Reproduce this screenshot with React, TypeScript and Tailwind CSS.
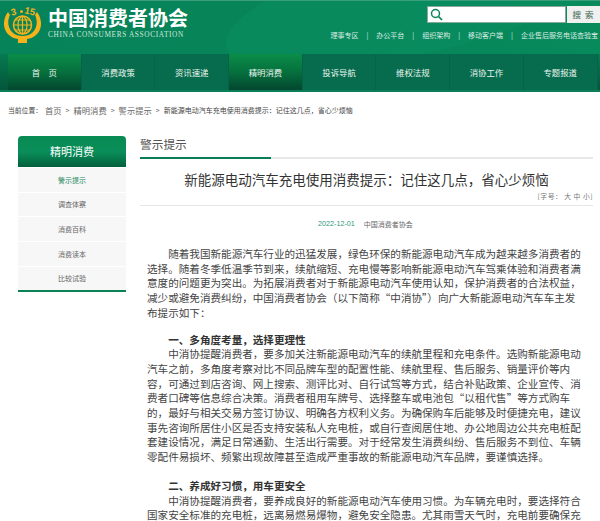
const cjk = "font-['Noto_Sans_CJK_SC','Microsoft_YaHei',sans-serif]";

const navItems = ["首　页", "消费政策", "资讯速递", "精明消费", "投诉导航", "维权法规", "消协工作", "专题报道"];
const topLinks = ["理事专区", "办公平台", "组织架构", "移动客户端", "企业售后服务电话查验宝"];
const sideItems = ["警示提示", "调查体察", "消费百科", "消费读本", "比较试验"];

function Logo() {
  return (
    <svg width="37" height="40" viewBox="0 0 37 40" className="shrink-0">
      <path d="M4 8 C-2 16 -1 26 5 31 C8 34 11 34.500 14 35 L14 39 L23 39 L23 35 C26 34.500 29 34 32 31 C38 26 39 16 33 8 L31 11 C34 17 33 24 29 28 C26 31 22 32 18.500 32 C15 32 11 31 8 28 C4 24 3 17 6 11 Z" fill="#f5b21a" />
      <circle cx="18.500" cy="21" r="9" fill="#0a8457" stroke="#f5b21a" strokeWidth="1.500" />
      <path d="M18.500 12 V30 M9.500 21 H27.500 M11 16 H26 M11 26 H26 M18.500 12 C12.500 15 12.500 27 18.500 30 M18.500 12 C24.500 15 24.500 27 18.500 30" fill="none" stroke="#f5b21a" strokeWidth="1.200" />
      <text x="7" y="11" fontSize="9.500" fontWeight="700" fill="#f5b21a" fontFamily="Liberation Sans" transform="rotate(-14 10 8)">3</text>
      <circle cx="17.500" cy="7.500" r="1.500" fill="#f5b21a" />
      <text x="20.500" y="10.500" fontSize="9.500" fontWeight="700" fill="#f5b21a" fontFamily="Liberation Sans" transform="rotate(12 26 8)">15</text>
    </svg>
  );
}

function Header() {
  return (
    <header className="relative h-[54px] overflow-hidden bg-gradient-to-r from-[#07835a] via-[#078558] to-[#078a5c] border-t border-[#3a9d7c]">
      <div className="absolute right-[-40px] top-[-60px] h-[110px] w-[420px] rotate-[-14deg] rounded-[50%] bg-[#0a8d60] opacity-60" />
      <div className="relative flex h-full justify-between">
        <div className="flex items-start pl-[4px] pt-[3px] gap-[7px]">
          <Logo />
          <div className="pt-[4px]">
            <div className={`${cjk} text-[20px] leading-[20px] font-bold text-white`}>中国消费者协会</div>
            <div className="mt-[3px] font-['Liberation_Serif',serif] text-[7.300px] leading-[8px] tracking-[0.65px] text-[#cfe8dc] whitespace-nowrap">CHINA CONSUMERS ASSOCIATION</div>
          </div>
        </div>
        <div className="flex flex-col items-end pt-[5px] pr-[2px]">
          <div className="flex h-[17px] w-[173px] -mr-[2px]">
            <div className="flex w-[139px] items-center border border-[#8aa89b] bg-white pl-[2px]">
              <svg width="13" height="13" viewBox="0 0 13 13">
                <circle cx="5.500" cy="5.500" r="4" fill="none" stroke="#0a8457" strokeWidth="1.500" />
                <path d="M8.500 8.500 L12 12" stroke="#0a8457" strokeWidth="1.700" />
              </svg>
            </div>
            <div className={`${cjk} ml-[1px] flex flex-1 items-center justify-center bg-[#eef1ef] text-[8.500px] font-bold tracking-[1px] text-[#6f8a7d]`}>搜 索</div>
          </div>
          <div className={`${cjk} mt-[8px] flex items-center text-[7px] leading-[9px] text-[#d8ece3] whitespace-nowrap`}>
            {topLinks.map((t, i) => (
              <span key={t} className="flex items-center">
                {i > 0 && <span className="mx-[8px]">|</span>}
                {t}
              </span>
            ))}
          </div>
        </div>
      </div>
    </header>
  );
}

function Nav() {
  return (
    <nav className="flex h-[38px] border-b-2 border-[#0b8058] bg-gradient-to-b from-[#067a50] to-[#04563a] pl-[8px]">
      {navItems.map((n) => {
        const active = n === "首　页" || n === "精明消费";
        return (
          <div
            key={n}
            className={`${cjk} flex h-full w-[73.700px] shrink-0 items-center justify-center border-r border-[#06624a] text-[8.400px] text-[#eaf5ef] ${
              active ? "bg-gradient-to-b from-[#0a8d48] via-[#06703d] to-[#03472f]" : "bg-[#076c4d]"
            }`}
          >
            {n}
          </div>
        );
      })}
    </nav>
  );
}

function Crumbs() {
  return (
    <div className={`${cjk} flex h-[36px] items-center gap-[3px] pl-[8px] text-[#666] whitespace-nowrap`}>
      <span className="text-[6.800px] text-[#444]">当前位置：</span>
      <span className="text-[8.300px]">首页</span>
      <span className="mx-[1px] text-[7px]">&gt;</span>
      <span className="text-[8.300px]">精明消费</span>
      <span className="mx-[1px] text-[7px]">&gt;</span>
      <span className="text-[8.300px]">警示提示</span>
      <span className="mx-[1px] text-[7px]">&gt;</span>
      <span className="text-[7px] text-[#444]">新能源电动汽车充电使用消费提示：记住这几点，省心少烦恼</span>
    </div>
  );
}

function Sidebar() {
  return (
    <aside className="ml-[18px] w-[108px] shrink-0">
      <div className={`${cjk} flex h-[31px] items-center justify-center rounded-t-[4px] bg-gradient-to-b from-[#088a52] via-[#0a8f5a] to-[#04603c] text-[11px] text-white`}>精明消费</div>
      <ul className="mt-[1px] flex flex-col gap-[1px]">
        {sideItems.map((s, i) => (
          <li
            key={s}
            className={`${cjk} flex h-[23.700px] items-center justify-center bg-[#f7f7f7] text-[7px] ${i === 0 ? "text-[#1d8a62]" : "text-[#666]"}`}
          >
            {s}
          </li>
        ))}
      </ul>
      <div className="h-[2px] bg-[#0a8457]" />
    </aside>
  );
}

function Article() {
  return (
    <main className="ml-[14px] w-[453px] shrink-0 overflow-hidden">
      <div className="relative h-[23px] border-b-2 border-[#e8e8e8]">
        <div className={`${cjk} text-[11.700px] leading-[14px] pt-[1px] text-[#555]`}>警示提示</div>
        <div className="absolute bottom-[-2px] left-0 h-[2px] w-[131px] bg-[#0a7d55]" />
      </div>
      <h1 className={`${cjk} mt-[10px] text-center text-[13.500px] leading-[20px] font-normal text-[#333]`}>新能源电动汽车充电使用消费提示：记住这几点，省心少烦恼</h1>
      <div className={`${cjk} mt-[3px] text-right text-[6.800px] leading-[8px] tracking-[0.5px] text-[#777]`}>[字号： 大 中 小]</div>
      <div className="mt-[5px] h-[1px] bg-[#e6e6e6]" />
      <div className={`${cjk} mt-[13px] flex h-[10px] items-center gap-[9px] pl-[178px] text-[7px] whitespace-nowrap`}>
        <span className="font-['Liberation_Sans',sans-serif] text-[7.200px] text-[#2d9a78]">2022-12-01</span>
        <span className="text-[#666]">中国消费者协会</span>
      </div>
      <div className={`${cjk} mt-[18px] w-[436px] pl-[7px] box-content text-[10.580px] leading-[14.700px] text-[#444]`}>
        <p className="indent-[2em]">随着我国新能源汽车行业的迅猛发展，绿色环保的新能源电动汽车成为越来越多消费者的选择。随着冬季低温季节到来，续航缩短、充电慢等影响新能源电动汽车驾乘体验和消费者满意度的问题更为突出。为拓展消费者对于新能源电动汽车使用认知，保护消费者的合法权益，减少或避免消费纠纷，中国消费者协会（以下简称“中消协”）向广大新能源电动汽车车主发布提示如下：</p>
        <p className="h-[12px]" />
        <p className="indent-[2em] font-bold text-[#333]">一、多角度考量，选择更理性</p>
        <p className="indent-[2em]">中消协提醒消费者，要多加关注新能源电动汽车的续航里程和充电条件。选购新能源电动汽车之前，多角度考察对比不同品牌车型的配置性能、续航里程、售后服务、销量评价等内容，可通过到店咨询、网上搜索、测评比对、自行试驾等方式，结合补贴政策、企业宣传、消费者口碑等信息综合决策。消费者租用车牌号、选择整车或电池包“以租代售”等方式购车的，最好与相关交易方签订协议、明确各方权利义务。为确保购车后能够及时便捷充电，建议事先咨询所居住小区是否支持安装私人充电桩，或自行查阅居住地、办公地周边公共充电桩配套建设情况，满足日常通勤、生活出行需要。对于经常发生消费纠纷、售后服务不到位、车辆零配件易损坏、频繁出现故障甚至造成严重事故的新能源电动汽车品牌，要谨慎选择。</p>
        <p className="h-[14px]" />
        <p className="indent-[2em] font-bold text-[#333]">二、养成好习惯，用车更安全</p>
        <p className="indent-[2em]">中消协提醒消费者，要养成良好的新能源电动汽车使用习惯。为车辆充电时，要选择符合国家安全标准的充电桩，远离易燃易爆物，避免安全隐患。尤其雨雪天气时，充电前要确保充</p>
      </div>
    </main>
  );
}

export default function App() {
  return (
    <div className="h-[521px] w-[600px] overflow-hidden bg-white">
      <Header />
      <Nav />
      <Crumbs />
      <div className="mt-[8px] flex items-start">
        <Sidebar />
        <Article />
      </div>
    </div>
  );
}
